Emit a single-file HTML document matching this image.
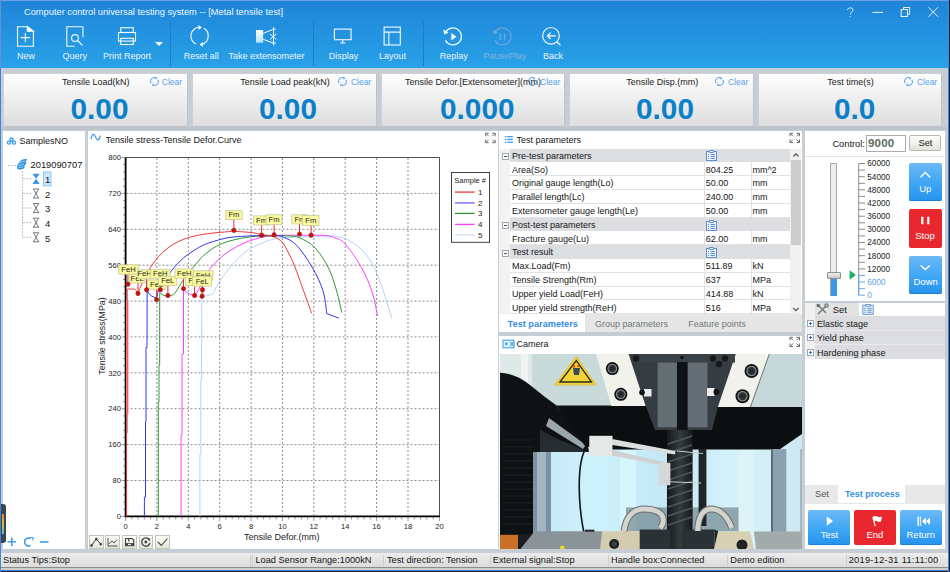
<!DOCTYPE html>
<html><head><meta charset="utf-8">
<style>
*{box-sizing:border-box;margin:0;padding:0}
html,body{width:950px;height:572px;overflow:hidden}
body{position:relative;background:#c6cdd4;font-family:"Liberation Sans",sans-serif;font-size:9px;color:#151515}
.a{position:absolute}
.t{position:absolute;white-space:nowrap;line-height:1}
#hdr{left:0;top:0;width:950px;height:68px;background:linear-gradient(#1e84d8,#29a2e8)}
#hdr .lbl{position:absolute;top:52px;color:#eaf4fc;font-size:9px;white-space:nowrap;line-height:1}
.sep{position:absolute;top:21px;width:1px;height:45px;background:#1f7bcb}
.gauge{position:absolute;top:73px;height:53.5px;background:linear-gradient(#fefefe,#dedede);border:1px solid #cdd1d5;border-right-color:#c0c4c8;border-bottom-color:#c0c4c8}
.gauge .gt{position:absolute;top:77px}
.gauge .cap{position:absolute;top:4px;font-size:9px;color:#222;white-space:nowrap;line-height:1}
.gauge .clr{position:absolute;top:4px;font-size:8.5px;color:#5aa2ea;white-space:nowrap;line-height:1}
.gauge .val{position:absolute;top:20.3px;font-size:29.8px;font-weight:bold;color:#0a80c8;white-space:nowrap;line-height:1}
.panel{position:absolute;background:#fff}
#status{left:0;top:552.5px;width:950px;height:14.5px;background:linear-gradient(#ececec,#dcdcdc)}
#status .t{top:3.7px;font-size:9.2px;color:#151515}
.ssep{position:absolute;top:2px;width:1px;height:12px;background:#c8d0c8}
</style></head><body>
<!-- header -->
<div id="hdr" class="a">
  <div class="a" style="left:0;top:0;width:950px;height:1px;background:#6f9fe4"></div>
  <div class="t" style="left:24px;top:6.6px;font-size:9.9px;color:#eef6fd;transform:scaleX(0.94);transform-origin:0 0">Computer control universal testing system -- [Metal tensile test]</div>
  <svg class="a" style="left:0;top:0" width="950" height="68" viewBox="0 0 950 68" fill="none" stroke="#f4faff" stroke-width="1.1">
    <!-- New -->
    <path d="M17.5 26.7 H27.3 L33.4 31.3 V46.3 H17.5 Z"/>
    <path d="M27.3 26.7 V31.3 H33.4 Z" fill="#f4faff"/>
    <path d="M20.8 37.6 H30.1 M25.4 33 V42.2"/>
    <!-- Query -->
    <path d="M74.7 46.3 H66.8 V26.7 H82.9 V37.6"/>
    <circle cx="75" cy="38" r="3.4"/>
    <path d="M77.5 40.5 L82.4 45.4" stroke-width="1.3"/>
    <!-- Print -->
    <rect x="120.7" y="27.7" width="12.6" height="4.8"/>
    <rect x="118.5" y="32.5" width="17" height="8.6"/>
    <rect x="120.7" y="38.3" width="12.6" height="6.2"/>
    <path d="M155 42.1 H163 L159 46 Z" fill="#f4faff" stroke="none"/>
    <!-- Reset -->
    <path d="M199.5 27.2 A8.8 8.8 0 0 0 196 44" />
    <path d="M203.8 28.2 A8.8 8.8 0 0 1 201.5 44.4" />
    <path d="M198.6 25.6 L201.5 27.4 L198.9 29.4 Z M202.9 42.6 L200 44.5 L202.6 46.4 Z" fill="#f4faff" stroke-width="0.6"/>
    <!-- Extensometer -->
    <rect x="256" y="30.1" width="7.1" height="12.6" fill="url(#extg)" stroke="none"/>
    <path d="M263.1 33.4 L273.5 29.2 H276 M263.1 39.3 L273.5 43.1 H276 M273.5 27.1 V45.4 M270 33.9 L276.3 39.5 M270 39.5 L276.3 33.9" stroke-width="1"/>
    <!-- Display -->
    <rect x="334.4" y="29.1" width="16.7" height="10.6"/>
    <path d="M342.6 39.7 V42.6 M340.2 43 H345.3" stroke-width="1.2"/>
    <!-- Layout -->
    <rect x="384.1" y="27.1" width="16.2" height="17.9"/>
    <path d="M384.1 32.1 H400.3 M388.8 32.1 V45"/>
    <!-- Replay -->
    <path d="M445.4 32.5 A8.5 8.5 0 1 1 445.4 40.4" stroke-width="1.2"/>
    <path d="M443.3 29.5 L444.2 34.6 L448.6 32.4 Z" fill="#f4faff" stroke="none"/>
    <path d="M451.3 33 L456.5 36.7 L451.3 40.5 Z" fill="#f4faff" stroke="none"/>
    <!-- PausePlay -->
    <g stroke="#73a9dc" opacity="0.9">
    <path d="M494.9 32.5 A8.5 8.5 0 1 1 494.9 40.4" stroke-width="1.2"/>
    <path d="M492.8 29.5 L493.7 34.6 L498.1 32.4 Z" fill="#73a9dc" stroke="none"/>
    <path d="M500.2 33.2 V40 M504.6 33.2 V40" stroke-width="1.5"/>
    </g>
    <!-- Back -->
    <circle cx="551" cy="35.8" r="8.3" stroke-width="1.2"/>
    <path d="M556.8 41.8 L560.4 45.3" stroke-width="1.2"/>
    <path d="M547.6 35.8 H555.9 M550.6 32.6 L547.4 35.8 L550.6 39" stroke-width="1.2"/>
    <defs><linearGradient id="extg" x1="0" y1="0" x2="0" y2="1"><stop offset="0" stop-color="#ffffff"/><stop offset="1" stop-color="#aee4f8"/></linearGradient></defs>
  </svg>
  <div class="sep" style="left:170px"></div>
  <div class="sep" style="left:312.5px"></div>
  <div class="sep" style="left:422.5px"></div>
  <div class="lbl" style="left:17px">New</div>
  <div class="lbl" style="left:62.6px">Query</div>
  <div class="lbl" style="left:103px">Print Report</div>
  <div class="lbl" style="left:183.8px">Reset all</div>
  <div class="lbl" style="left:228.5px">Take extensometer</div>
  <div class="lbl" style="left:328.8px">Display</div>
  <div class="lbl" style="left:378.9px">Layout</div>
  <div class="lbl" style="left:439.7px">Replay</div>
  <div class="lbl" style="left:483.4px;color:#82b4dc">PausePlay</div>
  <div class="lbl" style="left:543px">Back</div>
  <!-- window controls -->
  <svg class="a" style="left:840px;top:0" width="110" height="25" viewBox="840 0 110 25" fill="none" stroke="#e8f2fc" stroke-width="1">
    <path d="M847.6 10 C847.6 7.2 853 7.2 853 10 C853 12 850.3 12.2 850.3 14.3" />
    <circle cx="850.3" cy="16.5" r="0.6" fill="#e8f2fc" stroke="none"/>
    <path d="M872.3 12.4 H883"/>
    <rect x="901.2" y="9.5" width="6.2" height="7"/>
    <path d="M903.5 9.5 V7.5 H909.6 V14.2 H907.4"/>
    <path d="M928.5 7.2 L938 16.8 M938 7.2 L928.5 16.8"/>
  </svg>
</div>
<!-- gauges -->
<div class="gauge" style="left:3px;width:185px"><div class="cap" style="left:58.0px">Tensile Load(kN)</div><svg class="a" style="left:145.6px;top:2.8px" width="9" height="9" viewBox="0 0 9 9" fill="none" stroke="#4a9ae6" stroke-width="1"><path d="M6.2 1.1 A3.7 3.7 0 0 0 1.1 6.2 M2.8 7.9 A3.7 3.7 0 0 0 7.9 2.8"/><path d="M5 0.2 L6.8 1 L5.6 2.4 M4 8.8 L2.2 8 L3.4 6.6" stroke-width="0.8"/></svg><div class="clr" style="left:157.8px">Clear</div><div class="val" style="left:66.5px">0.00</div></div>
<div class="gauge" style="left:192px;width:185px"><div class="cap" style="left:47.3px">Tensile Load peak(kN)</div><svg class="a" style="left:145.2px;top:2.8px" width="9" height="9" viewBox="0 0 9 9" fill="none" stroke="#4a9ae6" stroke-width="1"><path d="M6.2 1.1 A3.7 3.7 0 0 0 1.1 6.2 M2.8 7.9 A3.7 3.7 0 0 0 7.9 2.8"/><path d="M5 0.2 L6.8 1 L5.6 2.4 M4 8.8 L2.2 8 L3.4 6.6" stroke-width="0.8"/></svg><div class="clr" style="left:157.9px">Clear</div><div class="val" style="left:66.0px">0.00</div></div>
<div class="gauge" style="left:381px;width:184px"><div class="cap" style="left:23.0px">Tensile Defor.[Extensometer](mm)</div><svg class="a" style="left:145.6px;top:2.8px" width="9" height="9" viewBox="0 0 9 9" fill="none" stroke="#4a9ae6" stroke-width="1"><path d="M6.2 1.1 A3.7 3.7 0 0 0 1.1 6.2 M2.8 7.9 A3.7 3.7 0 0 0 7.9 2.8"/><path d="M5 0.2 L6.8 1 L5.6 2.4 M4 8.8 L2.2 8 L3.4 6.6" stroke-width="0.8"/></svg><div class="clr" style="left:158.1px">Clear</div><div class="val" style="left:58.0px">0.000</div></div>
<div class="gauge" style="left:569px;width:185px"><div class="cap" style="left:56.3px">Tensile Disp.(mm)</div><svg class="a" style="left:145.1px;top:2.8px" width="9" height="9" viewBox="0 0 9 9" fill="none" stroke="#4a9ae6" stroke-width="1"><path d="M6.2 1.1 A3.7 3.7 0 0 0 1.1 6.2 M2.8 7.9 A3.7 3.7 0 0 0 7.9 2.8"/><path d="M5 0.2 L6.8 1 L5.6 2.4 M4 8.8 L2.2 8 L3.4 6.6" stroke-width="0.8"/></svg><div class="clr" style="left:158.0px">Clear</div><div class="val" style="left:66.0px">0.00</div></div>
<div class="gauge" style="left:758px;width:184px"><div class="cap" style="left:68.2px">Test time(s)</div><svg class="a" style="left:145.2px;top:2.8px" width="9" height="9" viewBox="0 0 9 9" fill="none" stroke="#4a9ae6" stroke-width="1"><path d="M6.2 1.1 A3.7 3.7 0 0 0 1.1 6.2 M2.8 7.9 A3.7 3.7 0 0 0 7.9 2.8"/><path d="M5 0.2 L6.8 1 L5.6 2.4 M4 8.8 L2.2 8 L3.4 6.6" stroke-width="0.8"/></svg><div class="clr" style="left:157.9px">Clear</div><div class="val" style="left:75.0px">0.0</div></div>

<!-- panels --><div class="a" style="left:0;top:127px;width:950px;height:3px;background:#bcc4cc"></div>
<div class="panel" style="left:3px;top:131px;width:82px;height:418px"></div>
<div class="panel" style="left:88px;top:131px;width:410px;height:418px"></div>
<div class="panel" style="left:499px;top:131px;width:303px;height:201px"></div>
<div class="panel" style="left:499px;top:335.5px;width:303px;height:213.5px"></div>
<div class="panel" style="left:805px;top:131px;width:140px;height:169.5px"></div>
<div class="panel" style="left:805px;top:303px;width:140px;height:246px"></div>


<!-- left tree -->
<svg class="a" style="left:0;top:125px" width="88" height="130" viewBox="0 125 88 130">
  <g fill="#3d9be9">
    <circle cx="11.5" cy="139.6" r="2.3"/><circle cx="8.9" cy="142.6" r="2.2"/><circle cx="14" cy="142.6" r="2.2"/>
  </g>
  <g fill="#fff"><circle cx="11.5" cy="139.6" r="0.9"/><circle cx="8.9" cy="142.6" r="0.9"/><circle cx="14" cy="142.6" r="0.9"/></g>
  <path d="M17 166 C19 161 23 158 27.2 159.2 L25.5 162 C26.5 162.5 26.8 163.5 25.8 164 L24.2 166.5 C25 167 24.8 168 24 168.5 L21 169.6 C19.5 169.8 17.5 169 17 168 Z" fill="#3596e6"/>
  <path d="M18.5 163 L25 161 M18 165.5 L24 164.2 M18.5 167.6 L23 166.8" stroke="#bfe0fb" stroke-width="0.7"/>
  <g stroke="#c2c2c2" stroke-width="1" stroke-dasharray="2 1" fill="none">
    <path d="M8 165.5 H16.5"/>
    <path d="M22.5 171 V237.5"/>
    <path d="M23 178.7 H31.5 M23 193.4 H31.5 M23 208 H31.5 M23 222.6 H31.5 M23 237.2 H31.5"/>
  </g>
  <path d="M33 174.3 H39.2 L36.1 178.8 Z M33 183.4 H39.2 L36.1 178.8 Z" fill="#2f93e8"/>
  <path d="M32.9 174.3 H39.3 M32.9 183.3 H39.3" stroke="#2f93e8" stroke-width="1"/>
  <rect x="43.5" y="172" width="7.4" height="13.8" fill="#cde8ff" stroke="#7fc0f5" stroke-width="0.9"/>
  <g fill="none" stroke="#6a6a6a" stroke-width="0.9">
    <path d="M33 189 H39.2 M33 198 H39.2 M33.6 189 L38.6 198 M38.6 189 L33.6 198"/>
    <path d="M33 203.6 H39.2 M33 212.6 H39.2 M33.6 203.6 L38.6 212.6 M38.6 203.6 L33.6 212.6"/>
    <path d="M33 218.2 H39.2 M33 227.2 H39.2 M33.6 218.2 L38.6 227.2 M38.6 218.2 L33.6 227.2"/>
    <path d="M33 232.8 H39.2 M33 241.8 H39.2 M33.6 232.8 L38.6 241.8 M38.6 232.8 L33.6 241.8"/>
  </g>
</svg>
<div class="t" style="left:19.6px;top:137.1px;font-size:9px">SamplesNO</div>
<div class="t" style="left:30.6px;top:160.6px;font-size:9.3px">2019090707</div>
<div class="t" style="left:45px;top:175.2px;font-size:9.5px">1</div>
<div class="t" style="left:45px;top:189.8px;font-size:9.5px">2</div>
<div class="t" style="left:45px;top:204.4px;font-size:9.5px">3</div>
<div class="t" style="left:45px;top:219.0px;font-size:9.5px">4</div>
<div class="t" style="left:45px;top:233.6px;font-size:9.5px">5</div>
<!-- left bottom icons -->
<svg class="a" style="left:0;top:530px" width="60" height="20" viewBox="0 530 60 20" fill="none" stroke="#3d9be9" stroke-width="1.6">
  <path d="M7.5 541.8 H16 M11.8 537.5 V546"/>
  <path d="M30.5 538.5 A4 4 0 1 0 30.5 545.5" />
  <path d="M29.5 537.5 H33 V540.5" stroke-width="1.2"/>
  <path d="M40 542 H48.5"/>
</svg>
<div class="a" style="left:1px;top:504px;width:5px;height:39px;background:#3a4550;border-radius:0 3px 3px 0"></div>
<div class="a" style="left:2px;top:514px;width:2px;height:20px;background:linear-gradient(#e08a30,#e0c030,#60b0d0)"></div>

<!-- chart -->
<svg class="a" style="left:88px;top:131px" width="410" height="418" viewBox="88 131 410 418" font-family="Liberation Sans">
  <path d="M91 139 C92.3 133.2 94.2 133.2 95.6 137 C97 141 99 141.2 100.4 135.5" stroke="#3d9be9" stroke-width="1.2" fill="none"/>
  <path d="M485.7 136.2 V133.2 H488.7 M485.7 133.2 L488.7 136.2 M492.2 133.2 H495.2 V136.2 M495.2 133.2 L492.2 136.2 M485.7 139.7 V142.7 H488.7 M485.7 142.7 L488.7 139.7 M495.2 139.7 V142.7 H492.2 M495.2 142.7 L492.2 139.7" stroke="#66707a" stroke-width="1" fill="none"/>
  <path d="M156.9 158 V515 M188.3 158 V515 M219.7 158 V515 M251.1 158 V515 M282.4 158 V515 M313.8 158 V515 M345.2 158 V515 M376.6 158 V515 M408.0 158 V515 M126.5 480.5 H439 M126.5 444.6 H439 M126.5 408.7 H439 M126.5 372.8 H439 M126.5 336.9 H439 M126.5 301.1 H439 M126.5 265.2 H439 M126.5 229.3 H439 M126.5 193.4 H439" stroke="#8c8c8c" stroke-width="1" stroke-dasharray="2 2" fill="none"/>
<path d="M125.5 517 V521 M131.8 517 V519.5 M138.1 517 V519.5 M144.3 517 V519.5 M150.6 517 V519.5 M156.9 517 V521 M163.2 517 V519.5 M169.4 517 V519.5 M175.7 517 V519.5 M182.0 517 V519.5 M188.3 517 V521 M194.6 517 V519.5 M200.8 517 V519.5 M207.1 517 V519.5 M213.4 517 V519.5 M219.7 517 V521 M225.9 517 V519.5 M232.2 517 V519.5 M238.5 517 V519.5 M244.8 517 V519.5 M251.1 517 V521 M257.3 517 V519.5 M263.6 517 V519.5 M269.9 517 V519.5 M276.2 517 V519.5 M282.4 517 V521 M288.7 517 V519.5 M295.0 517 V519.5 M301.3 517 V519.5 M307.6 517 V519.5 M313.8 517 V521 M320.1 517 V519.5 M326.4 517 V519.5 M332.7 517 V519.5 M339.0 517 V519.5 M345.2 517 V521 M351.5 517 V519.5 M357.8 517 V519.5 M364.1 517 V519.5 M370.3 517 V519.5 M376.6 517 V521 M382.9 517 V519.5 M389.2 517 V519.5 M395.5 517 V519.5 M401.7 517 V519.5 M408.0 517 V521 M414.3 517 V519.5 M420.6 517 V519.5 M426.8 517 V519.5 M433.1 517 V519.5 M439.4 517 V521 M121.5 516.4 H125 M123 509.2 H125 M123 502.0 H125 M123 494.9 H125 M123 487.7 H125 M121.5 480.5 H125 M123 473.3 H125 M123 466.2 H125 M123 459.0 H125 M123 451.8 H125 M121.5 444.6 H125 M123 437.4 H125 M123 430.3 H125 M123 423.1 H125 M123 415.9 H125 M121.5 408.7 H125 M123 401.6 H125 M123 394.4 H125 M123 387.2 H125 M123 380.0 H125 M121.5 372.8 H125 M123 365.7 H125 M123 358.5 H125 M123 351.3 H125 M123 344.1 H125 M121.5 336.9 H125 M123 329.8 H125 M123 322.6 H125 M123 315.4 H125 M123 308.2 H125 M121.5 301.1 H125 M123 293.9 H125 M123 286.7 H125 M123 279.5 H125 M123 272.3 H125 M121.5 265.2 H125 M123 258.0 H125 M123 250.8 H125 M123 243.6 H125 M123 236.5 H125 M121.5 229.3 H125 M123 222.1 H125 M123 214.9 H125 M123 207.7 H125 M123 200.6 H125 M121.5 193.4 H125 M123 186.2 H125 M123 179.0 H125 M123 171.9 H125 M123 164.7 H125 M121.5 157.5 H125" stroke="#9a9a9a" stroke-width="1" fill="none"/>
<path d="M125.5 157.5 H439.5 V516" stroke="#505050" stroke-width="1" fill="none"/>
<path d="M125.6 157.5 V516.4 H440" stroke="#000" stroke-width="1.8" fill="none"/>
<g font-family="Liberation Sans" font-size="7.6" fill="#222"><text x="121" y="519.1" text-anchor="end">0</text><text x="121" y="483.2" text-anchor="end">80</text><text x="121" y="447.3" text-anchor="end">160</text><text x="121" y="411.4" text-anchor="end">240</text><text x="121" y="375.5" text-anchor="end">320</text><text x="121" y="339.6" text-anchor="end">400</text><text x="121" y="303.8" text-anchor="end">480</text><text x="121" y="267.9" text-anchor="end">560</text><text x="121" y="232.0" text-anchor="end">640</text><text x="121" y="196.1" text-anchor="end">720</text><text x="121" y="160.2" text-anchor="end">800</text><text x="125.5" y="528.8" text-anchor="middle">0</text><text x="156.9" y="528.8" text-anchor="middle">2</text><text x="188.3" y="528.8" text-anchor="middle">4</text><text x="219.7" y="528.8" text-anchor="middle">6</text><text x="251.1" y="528.8" text-anchor="middle">8</text><text x="282.4" y="528.8" text-anchor="middle">10</text><text x="313.8" y="528.8" text-anchor="middle">12</text><text x="345.2" y="528.8" text-anchor="middle">14</text><text x="376.6" y="528.8" text-anchor="middle">16</text><text x="408.0" y="528.8" text-anchor="middle">18</text><text x="439.4" y="528.8" text-anchor="middle">20</text></g>
  <path d="M127.3 300 V414" stroke="#ff9a9a" stroke-width="2.6" fill="none"/>
<path d="M199.9 516.4 L199.9 454.5 L200.8 454.5 L200.8 380.0 L201.5 380.0 L201.8 290.0 C202.4 290.9 203.8 294.7 205.6 295.3 C207.4 295.9 211.2 294.8 212.9 293.5 C214.6 292.2 214.3 290.5 216.0 287.7 C217.7 284.9 220.0 280.7 223.0 276.5 C226.0 272.3 230.0 267.0 234.2 262.6 C238.4 258.2 243.4 253.3 248.1 250.0 C252.8 246.7 257.4 244.9 262.1 243.0 C266.8 241.1 270.1 239.6 276.4 238.6 C282.7 237.6 290.1 237.4 300.0 237.0 C309.9 236.6 326.6 235.4 335.5 236.4 C344.4 237.4 347.9 239.4 353.6 243.2 C359.3 247.0 364.9 252.2 369.5 259.0 C374.1 265.8 377.2 274.1 380.9 284.0 C384.6 293.9 390.0 312.5 391.8 318.2" stroke="#b4d4f6" stroke-width="1" fill="none"/>
<path d="M181.1 516.4 L181.1 434.8 L182.0 434.8 L182.0 354.0 L183.5 354.0 L183.5 288.6 C183.9 289.2 184.2 291.0 186.0 292.0 C187.8 293.0 192.2 295.8 194.6 294.7 C197.0 293.6 199.2 288.3 200.7 285.5 C202.2 282.7 201.6 281.1 203.4 278.0 C205.2 274.9 208.5 270.4 211.8 266.7 C215.1 263.0 218.8 259.0 223.0 255.6 C227.2 252.2 231.9 249.2 237.0 246.5 C242.1 243.8 247.9 241.3 253.7 239.5 C259.5 237.7 264.2 236.4 271.9 235.7 C279.6 235.0 291.1 235.3 300.0 235.3 C308.9 235.3 319.2 235.1 325.0 235.5 C330.8 235.9 331.8 236.7 335.0 238.0 C338.2 239.3 340.2 238.5 344.5 243.2 C348.8 247.8 355.9 257.9 360.5 265.9 C365.1 273.8 369.0 282.6 371.8 290.9 C374.6 299.2 376.6 311.7 377.5 315.9" stroke="#ff3cff" stroke-width="1" fill="none"/>
<path d="M158.3 516.4 L158.3 402.0 L159.0 402.0 L159.0 365.0 L159.7 365.0 L159.7 293.0 C160.4 293.4 162.6 294.8 164.0 295.3 C165.4 295.8 166.5 296.1 167.9 296.0 C169.3 295.9 171.4 295.4 172.5 295.0 C173.6 294.6 173.3 295.3 174.7 293.4 C176.1 291.5 178.8 287.0 181.0 283.6 C183.2 280.2 185.2 276.7 188.0 273.1 C190.8 269.5 195.1 264.9 197.7 262.0 C200.3 259.1 200.3 258.2 203.4 255.6 C206.5 253.0 211.6 248.9 216.0 246.5 C220.4 244.1 224.2 242.5 230.0 240.9 C235.8 239.3 244.0 237.5 251.0 236.7 C258.0 235.9 265.4 236.1 271.9 236.0 C278.4 235.9 285.3 235.7 290.0 236.0 C294.7 236.3 295.8 236.1 300.0 238.0 C304.2 239.9 310.2 242.7 315.0 247.7 C319.8 252.7 325.0 261.0 328.6 268.2 C332.2 275.4 334.4 283.5 336.6 290.9 C338.8 298.3 340.9 308.9 341.8 312.5" stroke="#2e9a2e" stroke-width="1" fill="none"/>
<path d="M144.4 516.4 L144.4 497.0 L145.5 497.0 L145.5 421.7 L146.0 421.7 L146.0 347.5 L147.0 347.5 L147.1 290.0 C147.7 290.9 148.9 294.1 150.5 295.3 C152.1 296.5 155.2 298.0 156.6 297.1 C157.9 296.2 157.1 293.1 158.6 290.0 C160.1 286.9 163.0 282.4 165.6 278.7 C168.2 275.0 171.0 271.1 174.0 267.6 C177.0 264.1 180.4 260.6 183.7 257.8 C186.9 255.0 190.0 253.0 193.5 250.8 C197.0 248.6 199.8 246.5 204.7 244.5 C209.6 242.5 217.6 240.1 223.0 238.8 C228.4 237.5 231.4 237.2 237.0 236.7 C242.6 236.2 250.5 235.9 256.5 235.7 C262.5 235.5 268.6 235.3 273.0 235.5 C277.4 235.7 279.0 235.3 283.0 237.0 C287.0 238.7 291.9 240.3 296.8 245.5 C301.8 250.7 308.3 260.6 312.7 268.2 C317.1 275.8 320.6 283.3 323.0 290.9 C325.4 298.5 326.2 309.8 326.8 313.6 L338.9 318.2" stroke="#3535f5" stroke-width="1" fill="none"/>
<path d="M126.5 516.4 L126.5 432.7 L127.1 432.7 L127.2 289.0 L127.5 289.0 L134.6 289.0 L136.0 290.5 L138.0 293.5 C138.4 292.4 139.7 289.0 140.7 286.6 C141.7 284.2 142.8 281.7 144.0 279.2 C145.2 276.7 146.5 274.2 148.0 271.6 C149.5 269.0 151.2 266.2 153.0 263.6 C154.8 261.0 156.8 258.5 159.0 256.1 C161.2 253.8 163.5 251.5 166.0 249.5 C168.5 247.5 171.2 245.6 174.0 243.9 C176.8 242.2 179.8 240.8 183.0 239.6 C186.2 238.3 189.5 237.3 193.0 236.4 C196.5 235.5 200.2 234.8 204.0 234.2 C207.8 233.6 212.2 233.1 216.0 232.7 C219.8 232.3 224.0 232.0 227.0 231.8 C230.0 231.6 229.9 231.3 233.9 231.4 C237.9 231.5 246.3 232.0 251.0 232.5 C255.7 233.0 258.4 233.9 262.1 234.6 C265.8 235.3 270.0 235.3 273.3 236.5 C276.6 237.7 279.6 239.4 282.0 242.0 C284.4 244.6 285.9 248.0 288.0 252.0 C290.1 256.0 291.9 259.4 294.5 265.9 C297.1 272.4 300.8 283.0 303.6 290.9 C306.5 298.8 310.3 309.5 311.6 313.2" stroke="#f03838" stroke-width="1" fill="none"/>
<g><path d="M127.9 274.2 V284.3" stroke="#e83030" stroke-width="1"/><rect x="118.7" y="264.9" width="19.6" height="9.3" fill="#fbfb9c" stroke="#c8c8a0" stroke-width="0.8"/><text x="128.5" y="271.8" text-anchor="middle" font-size="7.6" fill="#222">FeH</text></g>
<g><path d="M138.0 283.0 V293.5" stroke="#e83030" stroke-width="1"/><rect x="129.1" y="274.2" width="15.9" height="8.8" fill="#fbfb9c" stroke="#c8c8a0" stroke-width="0.8"/><text x="137.1" y="280.6" text-anchor="middle" font-size="7.6" fill="#222">FeL</text></g>
<g><path d="M146.6 278.8 V289.8" stroke="#e83030" stroke-width="1"/><rect x="137.6" y="269.8" width="14.1" height="9.0" fill="#fbfb9c" stroke="#c8c8a0" stroke-width="0.8"/><text x="144.6" y="276.4" text-anchor="middle" font-size="7.6" fill="#222">FeH</text></g>
<g><path d="M156.6 289.2 V299.6" stroke="#e83030" stroke-width="1"/><rect x="147.4" y="280.0" width="18.4" height="9.2" fill="#fbfb9c" stroke="#c8c8a0" stroke-width="0.8"/><text x="156.6" y="286.8" text-anchor="middle" font-size="7.6" fill="#222">FeL</text></g>
<g><path d="M160.3 278.8 V289.8" stroke="#e83030" stroke-width="1"/><rect x="150.5" y="269.3" width="19.5" height="9.5" fill="#fbfb9c" stroke="#c8c8a0" stroke-width="0.8"/><text x="160.2" y="276.4" text-anchor="middle" font-size="7.6" fill="#222">FeH</text></g>
<g><path d="M167.9 285.5 V295.5" stroke="#e83030" stroke-width="1"/><rect x="158.5" y="276.3" width="18.3" height="9.2" fill="#fbfb9c" stroke="#c8c8a0" stroke-width="0.8"/><text x="167.7" y="283.1" text-anchor="middle" font-size="7.6" fill="#222">FeL</text></g>
<g><path d="M183.5 278.2 V288.6" stroke="#e83030" stroke-width="1"/><rect x="175.0" y="269.0" width="18.3" height="9.2" fill="#fbfb9c" stroke="#c8c8a0" stroke-width="0.8"/><text x="184.2" y="275.8" text-anchor="middle" font-size="7.6" fill="#222">FeH</text></g>
<g><path d="M194.6 285.5 V295.5" stroke="#e83030" stroke-width="1"/><rect x="185.4" y="275.7" width="18.6" height="9.8" fill="#fbfb9c" stroke="#c8c8a0" stroke-width="0.8"/><text x="194.7" y="283.1" text-anchor="middle" font-size="7.6" fill="#222">FeL</text></g>
<g><path d="M202.5 280.0 V289.8" stroke="#e83030" stroke-width="1"/><rect x="193.3" y="270.8" width="19.6" height="9.2" fill="#fbfb9c" stroke="#c8c8a0" stroke-width="0.8"/><text x="203.1" y="277.6" text-anchor="middle" font-size="7.6" fill="#222">FeH</text></g>
<g><path d="M202.1 286.1 V296.3" stroke="#e83030" stroke-width="1"/><rect x="192.7" y="276.3" width="19.0" height="9.8" fill="#fbfb9c" stroke="#c8c8a0" stroke-width="0.8"/><text x="202.2" y="283.7" text-anchor="middle" font-size="7.6" fill="#222">FeL</text></g>
<g><path d="M233.9 219.6 V230.4" stroke="#e83030" stroke-width="1"/><rect x="225.8" y="210.6" width="16.3" height="9.0" fill="#fbfb9c" stroke="#c8c8a0" stroke-width="0.8"/><text x="233.9" y="217.2" text-anchor="middle" font-size="7.6" fill="#222">Fm</text></g>
<g><path d="M261.6 225.0 V235.2" stroke="#e83030" stroke-width="1"/><rect x="253.6" y="215.9" width="15.9" height="9.1" fill="#fbfb9c" stroke="#c8c8a0" stroke-width="0.8"/><text x="261.6" y="222.6" text-anchor="middle" font-size="7.6" fill="#222">Fm</text></g>
<g><path d="M274.1 224.5 V234.8" stroke="#e83030" stroke-width="1"/><rect x="266.1" y="214.8" width="15.9" height="9.7" fill="#fbfb9c" stroke="#c8c8a0" stroke-width="0.8"/><text x="274.1" y="222.1" text-anchor="middle" font-size="7.6" fill="#222">Fm</text></g>
<g><path d="M299.5 223.9 V234.1" stroke="#e83030" stroke-width="1"/><rect x="291.8" y="214.8" width="16.2" height="9.1" fill="#fbfb9c" stroke="#c8c8a0" stroke-width="0.8"/><text x="299.9" y="221.5" text-anchor="middle" font-size="7.6" fill="#222">Fm</text></g>
<g><path d="M311.1 225.5 V235.2" stroke="#e83030" stroke-width="1"/><rect x="302.5" y="215.5" width="16.5" height="10.0" fill="#fbfb9c" stroke="#c8c8a0" stroke-width="0.8"/><text x="310.8" y="223.1" text-anchor="middle" font-size="7.6" fill="#222">Fm</text></g>
<circle cx="127.9" cy="284.3" r="2.2" fill="#cc1010" stroke="#901010" stroke-width="0.5"/><circle cx="138.0" cy="293.5" r="2.2" fill="#cc1010" stroke="#901010" stroke-width="0.5"/><circle cx="146.6" cy="289.8" r="2.2" fill="#cc1010" stroke="#901010" stroke-width="0.5"/><circle cx="156.6" cy="299.6" r="2.2" fill="#cc1010" stroke="#901010" stroke-width="0.5"/><circle cx="160.3" cy="289.8" r="2.2" fill="#cc1010" stroke="#901010" stroke-width="0.5"/><circle cx="167.9" cy="295.5" r="2.2" fill="#cc1010" stroke="#901010" stroke-width="0.5"/><circle cx="183.5" cy="288.6" r="2.2" fill="#cc1010" stroke="#901010" stroke-width="0.5"/><circle cx="194.6" cy="295.5" r="2.2" fill="#cc1010" stroke="#901010" stroke-width="0.5"/><circle cx="202.5" cy="289.8" r="2.2" fill="#cc1010" stroke="#901010" stroke-width="0.5"/><circle cx="202.1" cy="296.3" r="2.2" fill="#cc1010" stroke="#901010" stroke-width="0.5"/><circle cx="233.9" cy="230.4" r="2.2" fill="#cc1010" stroke="#901010" stroke-width="0.5"/><circle cx="261.6" cy="235.2" r="2.2" fill="#cc1010" stroke="#901010" stroke-width="0.5"/><circle cx="274.1" cy="234.8" r="2.2" fill="#cc1010" stroke="#901010" stroke-width="0.5"/><circle cx="299.5" cy="234.1" r="2.2" fill="#cc1010" stroke="#901010" stroke-width="0.5"/><circle cx="311.1" cy="235.2" r="2.2" fill="#cc1010" stroke="#901010" stroke-width="0.5"/>
  <rect x="451.5" y="172.5" width="38" height="69.8" fill="#fff" stroke="#404040" stroke-width="1"/>
  <text x="454.3" y="182.6" font-size="7.5" fill="#222">Sample #</text>
  <g stroke-width="1.3"><path d="M454.9 192.1 H474.6" stroke="#f03838"/><path d="M454.9 202.9 H474.6" stroke="#8080ff" stroke-width="1.6"/><path d="M454.9 213.4 H474.6" stroke="#2e9a2e"/><path d="M454.9 224.4 H474.6" stroke="#ff3cff"/><path d="M454.9 234.9 H474.6" stroke="#c8def6"/></g>
  <g font-size="8" fill="#222"><text x="478" y="195">1</text><text x="478" y="205.8">2</text><text x="478" y="216.3">3</text><text x="478" y="227.3">4</text><text x="478" y="237.8">5</text></g>
  <text transform="translate(104.8 336) rotate(-90)" text-anchor="middle" font-size="8.8" fill="#222">Tensile stress(MPa)</text>
  <text x="281.8" y="540.2" text-anchor="middle" font-size="9" fill="#222">Tensile Defor.(mm)</text>
</svg>
<!-- chart toolbar -->
<div class="a" style="left:89px;top:535.3px;width:14.5px;height:13.3px;border:1px solid #c4c4b8;background:linear-gradient(#fcfcf8,#e6e6dc)"></div>
<div class="a" style="left:105.4px;top:535.3px;width:14.5px;height:13.3px;border:1px solid #c4c4b8;background:linear-gradient(#fcfcf8,#e6e6dc)"></div>
<div class="a" style="left:122.3px;top:535.3px;width:14.5px;height:13.3px;border:1px solid #c4c4b8;background:linear-gradient(#fcfcf8,#e6e6dc)"></div>
<div class="a" style="left:138.5px;top:535.3px;width:14.5px;height:13.3px;border:1px solid #c4c4b8;background:linear-gradient(#fcfcf8,#e6e6dc)"></div>
<div class="a" style="left:155.3px;top:535.3px;width:14.5px;height:13.3px;border:1px solid #c4c4b8;background:linear-gradient(#fcfcf8,#e6e6dc)"></div>
<svg class="a" style="left:88px;top:533px" width="85" height="18" viewBox="88 533 85 18" fill="none" stroke="#404040" stroke-width="1">
  <path d="M91.5 545.5 L96.3 539 L100.8 544.2"/><circle cx="91.5" cy="545.5" r="0.9" fill="#404040"/><circle cx="96.3" cy="539" r="0.9" fill="#404040"/><circle cx="100.8" cy="544.2" r="0.9" fill="#404040"/>
  <path d="M108 538 V546 H117.5 M109 544 L112 541 L114 543 L117 539.5" stroke-width="0.9"/>
  <path d="M125.5 538.5 H132 L133.8 540.3 V545.8 H125.5 Z" stroke-width="1.1"/><path d="M128.8 538.5 V541.5" stroke-width="1.3"/><path d="M125.5 544.3 H133.8" stroke-width="2.4"/><path d="M128 544.5 H131" stroke="#eee" stroke-width="1.2"/>
  <path d="M149.3 539.5 A4.2 4.2 0 1 0 150 543" stroke-width="1.3"/><circle cx="145.8" cy="542" r="1.4" fill="#404040" stroke="none"/><path d="M147.5 538 L150.3 538.8 L149.3 541.5 Z" fill="#404040" stroke="none"/>
  <path d="M157.8 541.8 L161.3 545.5 L167.5 538.5" stroke-width="1.1"/>
</svg>
<div class="t" style="left:105.4px;top:136px;font-size:9px">Tensile stress-Tensile Defor.Curve</div>


<!-- params panel -->
<svg class="a" style="left:504px;top:135px" width="10" height="10" viewBox="0 0 10 10" fill="#3d9be9"><rect x="0.8" y="1" width="1.6" height="1.3"/><rect x="3.2" y="1" width="5.6" height="1.3"/><rect x="0.8" y="3.8" width="1.6" height="1.3"/><rect x="3.2" y="3.8" width="5.6" height="1.3"/><rect x="0.8" y="6.6" width="1.6" height="1.3"/><rect x="3.2" y="6.6" width="5.6" height="1.3"/></svg>
<div class="t" style="left:516.4px;top:135.5px;font-size:9px">Test parameters</div>
<svg class="a" style="left:788px;top:131px" width="14" height="14" viewBox="788 131 14 14"><path d="M790 136.3 V133.3 H793 M790 133.3 L793 136.3 M796.5 133.3 H799.5 V136.3 M799.5 133.3 L796.5 136.3 M790 139.5 V142.5 H793 M790 142.5 L793 139.5 M799.5 139.5 V142.5 H796.5 M799.5 142.5 L796.5 139.5" stroke="#66707a" stroke-width="1" fill="none"/></svg>
<div class="a" style="left:499px;top:148.5px;width:11.2px;height:165.6px;background:#f3f3f3"></div><div class="a" style="left:510.2px;top:148.5px;width:280px;height:13.8px;background:#dcdee2"></div><div class="t" style="left:512px;top:151.7px;font-size:9px">Pre-test parameters</div><svg class="a" style="left:706px;top:150px" width="11" height="11" viewBox="0 0 11 11" fill="none" stroke="#5b8fd0" stroke-width="1"><rect x="0.5" y="1.5" width="10" height="9" fill="#eef4fc"/><path d="M3.5 0.5 H7.5 V2.5 H3.5 Z" fill="#fff"/><path d="M2 4.5 H3 M2 6.5 H3 M2 8.5 H3 M4.5 4.5 H9 M4.5 6.5 H9 M4.5 8.5 H9"/></svg><svg class="a" style="left:501px;top:152px" width="9" height="9" viewBox="0 0 9 9"><rect x="1.5" y="1.5" width="6" height="6" fill="#fff" stroke="#a0a6ae" stroke-width="1"/><path d="M3 4.5 H6" stroke="#505050" stroke-width="1"/></svg><div class="a" style="left:510.2px;top:175.1px;width:280px;height:1px;background:#e2e2e2"></div><div class="t" style="left:512px;top:165.5px;font-size:9px">Area(So)</div><div class="t" style="left:705.7px;top:165.5px;font-size:9px">804.25</div><div class="t" style="left:752.4px;top:165.5px;font-size:9px">mm^2</div><div class="a" style="left:703.5px;top:162.3px;width:1px;height:13.8px;background:#e2e2e2"></div><div class="a" style="left:750.5px;top:162.3px;width:1px;height:13.8px;background:#e2e2e2"></div><div class="a" style="left:510.2px;top:188.9px;width:280px;height:1px;background:#e2e2e2"></div><div class="t" style="left:512px;top:179.3px;font-size:9px">Original gauge length(Lo)</div><div class="t" style="left:705.7px;top:179.3px;font-size:9px">50.00</div><div class="t" style="left:752.4px;top:179.3px;font-size:9px">mm</div><div class="a" style="left:703.5px;top:176.1px;width:1px;height:13.8px;background:#e2e2e2"></div><div class="a" style="left:750.5px;top:176.1px;width:1px;height:13.8px;background:#e2e2e2"></div><div class="a" style="left:510.2px;top:202.7px;width:280px;height:1px;background:#e2e2e2"></div><div class="t" style="left:512px;top:193.1px;font-size:9px">Parallel length(Lc)</div><div class="t" style="left:705.7px;top:193.1px;font-size:9px">240.00</div><div class="t" style="left:752.4px;top:193.1px;font-size:9px">mm</div><div class="a" style="left:703.5px;top:189.9px;width:1px;height:13.8px;background:#e2e2e2"></div><div class="a" style="left:750.5px;top:189.9px;width:1px;height:13.8px;background:#e2e2e2"></div><div class="a" style="left:510.2px;top:216.5px;width:280px;height:1px;background:#e2e2e2"></div><div class="t" style="left:512px;top:206.9px;font-size:9px">Extensometer gauge length(Le)</div><div class="t" style="left:705.7px;top:206.9px;font-size:9px">50.00</div><div class="t" style="left:752.4px;top:206.9px;font-size:9px">mm</div><div class="a" style="left:703.5px;top:203.7px;width:1px;height:13.8px;background:#e2e2e2"></div><div class="a" style="left:750.5px;top:203.7px;width:1px;height:13.8px;background:#e2e2e2"></div><div class="a" style="left:510.2px;top:217.5px;width:280px;height:13.8px;background:#dcdee2"></div><div class="t" style="left:512px;top:220.7px;font-size:9px">Post-test parameters</div><svg class="a" style="left:706px;top:220px" width="11" height="11" viewBox="0 0 11 11" fill="none" stroke="#5b8fd0" stroke-width="1"><rect x="0.5" y="1.5" width="10" height="9" fill="#eef4fc"/><path d="M3.5 0.5 H7.5 V2.5 H3.5 Z" fill="#fff"/><path d="M2 4.5 H3 M2 6.5 H3 M2 8.5 H3 M4.5 4.5 H9 M4.5 6.5 H9 M4.5 8.5 H9"/></svg><svg class="a" style="left:501px;top:221px" width="9" height="9" viewBox="0 0 9 9"><rect x="1.5" y="1.5" width="6" height="6" fill="#fff" stroke="#a0a6ae" stroke-width="1"/><path d="M3 4.5 H6" stroke="#505050" stroke-width="1"/></svg><div class="a" style="left:510.2px;top:244.1px;width:280px;height:1px;background:#e2e2e2"></div><div class="t" style="left:512px;top:234.5px;font-size:9px">Fracture gauge(Lu)</div><div class="t" style="left:705.7px;top:234.5px;font-size:9px">62.00</div><div class="t" style="left:752.4px;top:234.5px;font-size:9px">mm</div><div class="a" style="left:703.5px;top:231.3px;width:1px;height:13.8px;background:#e2e2e2"></div><div class="a" style="left:750.5px;top:231.3px;width:1px;height:13.8px;background:#e2e2e2"></div><div class="a" style="left:510.2px;top:245.1px;width:280px;height:13.8px;background:#dcdee2"></div><div class="t" style="left:512px;top:248.3px;font-size:9px">Test result</div><svg class="a" style="left:706px;top:247px" width="11" height="11" viewBox="0 0 11 11" fill="none" stroke="#5b8fd0" stroke-width="1"><rect x="0.5" y="1.5" width="10" height="9" fill="#eef4fc"/><path d="M3.5 0.5 H7.5 V2.5 H3.5 Z" fill="#fff"/><path d="M2 4.5 H3 M2 6.5 H3 M2 8.5 H3 M4.5 4.5 H9 M4.5 6.5 H9 M4.5 8.5 H9"/></svg><svg class="a" style="left:501px;top:249px" width="9" height="9" viewBox="0 0 9 9"><rect x="1.5" y="1.5" width="6" height="6" fill="#fff" stroke="#a0a6ae" stroke-width="1"/><path d="M3 4.5 H6" stroke="#505050" stroke-width="1"/></svg><div class="a" style="left:510.2px;top:271.7px;width:280px;height:1px;background:#e2e2e2"></div><div class="t" style="left:512px;top:262.1px;font-size:9px">Max.Load(Fm)</div><div class="t" style="left:705.7px;top:262.1px;font-size:9px">511.89</div><div class="t" style="left:752.4px;top:262.1px;font-size:9px">kN</div><div class="a" style="left:703.5px;top:258.9px;width:1px;height:13.8px;background:#e2e2e2"></div><div class="a" style="left:750.5px;top:258.9px;width:1px;height:13.8px;background:#e2e2e2"></div><div class="a" style="left:510.2px;top:285.5px;width:280px;height:1px;background:#e2e2e2"></div><div class="t" style="left:512px;top:275.9px;font-size:9px">Tensile Strength(Rm)</div><div class="t" style="left:705.7px;top:275.9px;font-size:9px">637</div><div class="t" style="left:752.4px;top:275.9px;font-size:9px">MPa</div><div class="a" style="left:703.5px;top:272.7px;width:1px;height:13.8px;background:#e2e2e2"></div><div class="a" style="left:750.5px;top:272.7px;width:1px;height:13.8px;background:#e2e2e2"></div><div class="a" style="left:510.2px;top:299.3px;width:280px;height:1px;background:#e2e2e2"></div><div class="t" style="left:512px;top:289.7px;font-size:9px">Upper yield Load(FeH)</div><div class="t" style="left:705.7px;top:289.7px;font-size:9px">414.88</div><div class="t" style="left:752.4px;top:289.7px;font-size:9px">kN</div><div class="a" style="left:703.5px;top:286.5px;width:1px;height:13.8px;background:#e2e2e2"></div><div class="a" style="left:750.5px;top:286.5px;width:1px;height:13.8px;background:#e2e2e2"></div><div class="a" style="left:510.2px;top:313.1px;width:280px;height:1px;background:#e2e2e2"></div><div class="t" style="left:512px;top:303.5px;font-size:9px">Upper yield strength(ReH)</div><div class="t" style="left:705.7px;top:303.5px;font-size:9px">516</div><div class="t" style="left:752.4px;top:303.5px;font-size:9px">MPa</div><div class="a" style="left:703.5px;top:300.3px;width:1px;height:13.8px;background:#e2e2e2"></div><div class="a" style="left:750.5px;top:300.3px;width:1px;height:13.8px;background:#e2e2e2"></div>
<div class="a" style="left:790.3px;top:148.5px;width:11.2px;height:165.6px;background:#f0f0f0"></div>
<div class="a" style="left:791.4px;top:160px;width:9.2px;height:84.6px;background:#cdcdcd"></div>
<svg class="a" style="left:790px;top:148px" width="12" height="167" viewBox="790 148 12 167" fill="none" stroke="#505050" stroke-width="1.1"><path d="M793.3 156.5 L795.9 153.9 L798.5 156.5 M793.3 308 L795.9 310.6 L798.5 308"/></svg>
<div class="a" style="left:499px;top:314.1px;width:303px;height:17.9px;background:#e6e6e6"></div>
<div class="a" style="left:499px;top:314.1px;width:86.2px;height:17.9px;background:#fff"></div>
<div class="t" style="left:507.6px;top:319.8px;font-size:9.2px;font-weight:bold;color:#3a8fe0">Test parameters</div>
<div class="t" style="left:595px;top:319.6px;font-size:9px;color:#707878">Group parameters</div>
<div class="t" style="left:688.2px;top:319.6px;font-size:9px;color:#707878">Feature points</div>


<!-- camera panel -->
<svg class="a" style="left:502px;top:339px" width="13" height="10" viewBox="0 0 13 10" fill="none" stroke="#4aa0ea" stroke-width="1.1"><rect x="1" y="1.2" width="11" height="7.6" fill="#e8f4fd"/><circle cx="4.3" cy="5" r="1.4" fill="#4aa0ea" stroke="none"/><path d="M8 3 L10 5 L8 7 M12 2.5 L10 5 L12 7.5"/></svg>
<div class="t" style="left:516.5px;top:340.3px;font-size:9px">Camera</div>
<svg class="a" style="left:788px;top:335px" width="14" height="14" viewBox="788 335 14 14"><path d="M790 340.3 V337.3 H793 M790 337.3 L793 340.3 M796.5 337.3 H799.5 V340.3 M799.5 337.3 L796.5 340.3 M790 343.5 V346.5 H793 M790 346.5 L793 343.5 M799.5 343.5 V346.5 H796.5 M799.5 346.5 L796.5 343.5" stroke="#66707a" stroke-width="1" fill="none"/></svg>
<div class="a" style="left:499px;top:353.5px;width:303px;height:1px;background:#c8d4e0"></div>
<svg class="a" style="left:500px;top:354px" width="302" height="195" viewBox="500 354 302 195">
  <defs>
    <linearGradient id="win" x1="0" y1="0" x2="1" y2="0"><stop offset="0" stop-color="#bfe2f0"/><stop offset="0.3" stop-color="#cef2fb"/><stop offset="0.55" stop-color="#c2e8f6"/><stop offset="0.8" stop-color="#d6f3fa"/><stop offset="1" stop-color="#cde8f0"/></linearGradient>
    <linearGradient id="rod" x1="0" y1="0" x2="1" y2="0"><stop offset="0" stop-color="#15191b"/><stop offset="0.5" stop-color="#353b3e"/><stop offset="1" stop-color="#15191b"/></linearGradient>
    <radialGradient id="bolt"><stop offset="0" stop-color="#202426"/><stop offset="0.5" stop-color="#303436"/><stop offset="0.66" stop-color="#8a9496"/><stop offset="0.8" stop-color="#101214"/><stop offset="1" stop-color="#101214"/></radialGradient>
  </defs>
  <rect x="500" y="354" width="302" height="195" fill="url(#win)"/>
  <rect x="620" y="450" width="16" height="85" fill="#d8f8fe" opacity="0.8"/>
  <rect x="738" y="450" width="16" height="85" fill="#e0f2f8" opacity="0.8"/>
  <rect x="626" y="507.4" width="112.6" height="24" fill="#5a6a72" opacity="0.55"/>
  <!-- upper wall -->
  <rect x="500" y="354" width="302" height="54" fill="#c8dada"/>
  <path d="M500 354 H532 V388 L520 378 L500 372.7 Z" fill="#dfe9e8"/>
  <path d="M521 354 H528 V383 L521 379 Z" fill="#f0f5f3"/>
  <!-- left black cover + bellows -->
  <path d="M500 372.7 C510 373 520 377 530 385 L545 397 L556.6 405.4 L588 446 L589 452 H534 V535 H500 Z" fill="#0f1214"/><path d="M540 430 L560 440 L589 452 H540 Z" fill="#262c30"/>
  <g stroke="#20262a" stroke-width="0.9"><path d="M502 440 H533 M502 447 H533 M502 454 H533 M502 461 H533 M502 468 H533 M502 475 H533 M502 482 H533 M502 489 H533 M502 496 H533 M502 503 H533 M502 510 H533 M502 517 H533 M502 524 H533"/></g>
  <path d="M549 418 L586 445 L583 449 L546 426 Z" fill="#9aa6ac"/>
  <!-- gray column left -->
  <rect x="533" y="452" width="18" height="83" fill="#7a92a2"/>
  <rect x="537" y="452" width="9" height="83" fill="#a2b6c2"/>
  <!-- crosshead black band -->
  <path d="M556.6 405.4 H802 V434 L779.5 449.4 H600 L585 446 Z" fill="#0c0f10"/>
  <!-- white plates -->
  <path d="M596 354 H628.6 L645.7 406 H611.4 Z" fill="#f2f2ec"/>
  <path d="M735.8 354 H769.3 L750.4 407.1 H717.8 Z" fill="#f2f2ec"/>
  <circle cx="612.3" cy="368.6" r="6.5" fill="url(#bolt)"/><circle cx="620.8" cy="394.3" r="6.5" fill="url(#bolt)"/>
  <circle cx="751.5" cy="371" r="7" fill="url(#bolt)"/><circle cx="742.5" cy="396.2" r="7" fill="url(#bolt)"/>
  <!-- right wall -->
  <path d="M769.3 354 H802 V407.1 H750.4 Z" fill="#c6d8da"/>
  <path d="M769.3 354 L750.4 407.1" stroke="#50585a" stroke-width="0.8"/>
  <!-- top grip -->
  <path d="M628.6 354 H735.8 L717.8 407.1 L712 430 H655 L645.7 406 Z" fill="#353c42"/>
  <rect x="640" y="354" width="95" height="8.6" fill="#3a4248"/>
  <rect x="657.6" y="362.5" width="19.5" height="64.8" fill="#646e74"/>
  <rect x="687.5" y="362.5" width="20" height="64.8" fill="#646e74"/>
  <rect x="677" y="362" width="10.5" height="68" fill="#101315"/>
  <circle cx="713" cy="358.5" r="3.2" fill="#15191b"/><circle cx="725" cy="358.5" r="3.2" fill="#15191b"/><circle cx="719" cy="364" r="3.2" fill="#15191b"/>
  <circle cx="636" cy="358.5" r="3.2" fill="#15191b"/><circle cx="682" cy="357.5" r="1.8" fill="#101214"/>
  <rect x="707" y="388" width="7.5" height="8" fill="#ececec"/><circle cx="716.5" cy="392" r="3" fill="#101214"/>
  <rect x="644" y="389" width="7.5" height="7.5" fill="#ececec"/><circle cx="642" cy="392.5" r="2.8" fill="#101214"/>
  <!-- warning sign -->
  <path d="M554.9 384.9 L576.3 356.6 L596 384.9 Z" fill="#f2d436" stroke="#e2c44a" stroke-width="1.2" stroke-linejoin="round"/>
  <path d="M560 382 L576.3 360.5 L591.5 382 Z" fill="none" stroke="#2a2a22" stroke-width="1.3"/>
  <path d="M573 368 H580 L579 375 H574 Z" fill="#3c4a58"/><circle cx="574" cy="366.5" r="1.3" fill="#d85020"/><circle cx="578.5" cy="366" r="1.3" fill="#d85020"/>
  <!-- rod -->
  <rect x="667" y="430" width="25.6" height="119" fill="url(#rod)"/>
  <g stroke="#4e585c" stroke-width="1.6"><path d="M668 444 L692 436 M668 453 L692 445 M668 462 L692 454 M668 471 L692 463 M668 480 L692 472 M668 489 L692 481 M668 498 L692 490 M668 507 L692 499 M668 516 L692 508 M668 525 L692 517"/></g>
  <rect x="698.6" y="449" width="7.8" height="77" fill="#202426"/>
  <!-- right column -->
  <rect x="771" y="449" width="15.3" height="85.6" fill="#8ca2b0"/>
  <rect x="771" y="449" width="2" height="85.6" fill="#5a6e7a"/>
  <rect x="800" y="449" width="2" height="86" fill="#a8b8c0"/>
  <!-- extensometer -->
  <path d="M589.3 435.8 H612.5 V456.2 H589.3 Z" fill="#e6e8e8"/>
  <path d="M612 439 L675.5 451 L675 454.5 L612 445 Z" fill="#dcdfdf"/>
  <path d="M612 450 L668.7 463 L668 466.5 L612 455.5 Z" fill="#cdd1d1"/>
  <path d="M658.5 463 H670.4 V485.2 H658.5 Z" fill="#d4d8d8"/>
  <path d="M663 481.5 L701.2 483" stroke="#c8cccc" stroke-width="1.2"/>
  <path d="M677 451 L703 453.5" stroke="#c8cccc" stroke-width="1"/>
  <path d="M586 448 C577 462 578 500 583 528 C585 538 586 544 587 549" stroke="#121618" stroke-width="1.6" fill="none"/>
  <!-- bottom -->
  <rect x="500" y="534.8" width="18.2" height="14.2" fill="#c87028"/>
  <rect x="518" y="534" width="20" height="15" fill="#1a1e20"/>
  <path d="M520.4 549 L534.6 531.2 H602.2 V549 Z" fill="#8a9498"/>
  <circle cx="562.3" cy="548" r="2.5" fill="#e8d030"/>
  <rect x="584.8" y="529.7" width="9.6" height="2" fill="#202426"/>
  <path d="M602.2 531.2 H639.7 L645 549 H600 Z" fill="#d4ccae"/>
  <circle cx="614.2" cy="544" r="5" fill="#1e2224"/><circle cx="614.2" cy="544" r="2.5" fill="#3a4044"/>
  <rect x="639.7" y="529.5" width="30.7" height="19.5" fill="#2a3236"/>
  <rect x="685.7" y="529.5" width="29" height="19.5" fill="#2a3236"/>
  <path d="M714.7 529.5 L718 531 V549 H714.7 Z" fill="#1e2426"/>
  <path d="M624 531 C626 516 634 509 644 509 C654 509 662 512 663 518 C664 523 662 526 660 528" stroke="#6a7072" stroke-width="7" fill="none"/>
  <path d="M624 531 C626 516 634 509 644 509 C654 509 662 512 663 518 C664 523 662 526 660 528" stroke="#d4d4cc" stroke-width="5" fill="none"/>
  <path d="M697.7 531 C698 517 703 509 711.3 509 C721 509 728 518 731.8 528" stroke="#6a7072" stroke-width="7" fill="none"/>
  <path d="M697.7 531 C698 517 703 509 711.3 509 C721 509 728 518 731.8 528" stroke="#d4d4cc" stroke-width="5" fill="none"/>
  <path d="M718 531.5 H750 L754 549 H714 Z" fill="#d8d0b2"/>
  <circle cx="742" cy="545" r="5.5" fill="#1e2224"/>
  <path d="M754 531.5 H802 V549 H756 Z" fill="#a2aaaa"/>
</svg>

<!-- right panel: control -->
<div class="t" style="left:832.4px;top:139.6px;font-size:9.3px">Control:</div>
<div class="a" style="left:866px;top:134.6px;width:39.5px;height:17.1px;border:1px solid #a8acb0;background:#fff"></div>
<div class="t" style="left:868px;top:137.5px;font-size:11.5px;font-weight:bold;color:#5b6b5b;letter-spacing:0.2px">9000</div>
<div class="a" style="left:909px;top:135.1px;width:32.3px;height:15.8px;border:1px solid #b8bab0;border-radius:2px;background:linear-gradient(#fdfdfa,#e4e4dc)"></div>
<div class="t" style="left:918.5px;top:139.2px;font-size:9.3px">Set</div>
<div class="a" style="left:805px;top:156px;width:140px;height:1px;background:#e6e6e6"></div>
<!-- slider -->
<div class="a" style="left:830px;top:163px;width:7px;height:133px;border:1px solid #a8a8a8;background:#ececec"></div>
<div class="a" style="left:830.5px;top:278.8px;width:6px;height:16.8px;background:#3d94e8"></div>
<div class="a" style="left:827px;top:272px;width:13.8px;height:7px;border:1px solid #909090;border-radius:1px;background:linear-gradient(#f0f0f0,#c8c8c8)"></div>
<svg class="a" style="left:845px;top:160px" width="50" height="140" viewBox="845 160 50 140">
  <path d="M849.6 270.2 L855.8 275 L849.6 279.8 Z" fill="#12b060"/>
  <path d="M858.7 163.5 V295.2" stroke="#808080" stroke-width="0.9"/>
  <g stroke="#808080" stroke-width="0.9" id="tk"></g>
  <path d="M858.7 163.5 H865" stroke="#808080" stroke-width="0.9"/><path d="M858.7 170.1 H865" stroke="#808080" stroke-width="0.9"/><path d="M858.7 176.7 H865" stroke="#808080" stroke-width="0.9"/><path d="M858.7 183.3 H865" stroke="#808080" stroke-width="0.9"/><path d="M858.7 189.8 H865" stroke="#808080" stroke-width="0.9"/><path d="M858.7 196.4 H865" stroke="#808080" stroke-width="0.9"/><path d="M858.7 203.0 H865" stroke="#808080" stroke-width="0.9"/><path d="M858.7 209.6 H865" stroke="#808080" stroke-width="0.9"/><path d="M858.7 216.2 H865" stroke="#808080" stroke-width="0.9"/><path d="M858.7 222.8 H865" stroke="#808080" stroke-width="0.9"/><path d="M858.7 229.3 H865" stroke="#808080" stroke-width="0.9"/><path d="M858.7 235.9 H865" stroke="#808080" stroke-width="0.9"/><path d="M858.7 242.5 H865" stroke="#808080" stroke-width="0.9"/><path d="M858.7 249.1 H865" stroke="#808080" stroke-width="0.9"/><path d="M858.7 255.7 H865" stroke="#808080" stroke-width="0.9"/><path d="M858.7 262.3 H865" stroke="#808080" stroke-width="0.9"/><path d="M858.7 268.9 H865" stroke="#808080" stroke-width="0.9"/><path d="M858.7 275.4 H865" stroke="#5aa2ea" stroke-width="0.9"/><path d="M858.7 282.0 H865" stroke="#5aa2ea" stroke-width="0.9"/><path d="M858.7 288.6 H865" stroke="#5aa2ea" stroke-width="0.9"/><path d="M858.7 295.2 H865" stroke="#5aa2ea" stroke-width="0.9"/><text x="867.3" y="166.4" font-family="Liberation Sans" font-size="8.2" fill="#222">60000</text><text x="867.3" y="179.6" font-family="Liberation Sans" font-size="8.2" fill="#222">54000</text><text x="867.3" y="192.7" font-family="Liberation Sans" font-size="8.2" fill="#222">48000</text><text x="867.3" y="205.9" font-family="Liberation Sans" font-size="8.2" fill="#222">42000</text><text x="867.3" y="219.1" font-family="Liberation Sans" font-size="8.2" fill="#222">36000</text><text x="867.3" y="232.2" font-family="Liberation Sans" font-size="8.2" fill="#222">30000</text><text x="867.3" y="245.4" font-family="Liberation Sans" font-size="8.2" fill="#222">24000</text><text x="867.3" y="258.6" font-family="Liberation Sans" font-size="8.2" fill="#222">18000</text><text x="867.3" y="271.8" font-family="Liberation Sans" font-size="8.2" fill="#222">12000</text><text x="867.3" y="284.9" font-family="Liberation Sans" font-size="8.2" fill="#5aa2ea">6000</text><text x="867.3" y="298.1" font-family="Liberation Sans" font-size="8.2" fill="#5aa2ea">0</text><path d="M858.7 275 V295.2" stroke="#5aa2ea" stroke-width="0.9"/>
</svg>
<!-- buttons -->
<div class="a" style="left:908.7px;top:162.9px;width:33.3px;height:38.4px;border-radius:2px;background:linear-gradient(#6cb9f7,#3ea6f4 55%,#2592ec);box-shadow:inset 0 -1px 0 #1c7ed6"></div>
<div class="t" style="left:919.2px;top:184.1px;font-size:9.5px;color:#fff">Up</div>
<div class="a" style="left:908.7px;top:209.2px;width:33.3px;height:38.5px;border-radius:2px;background:#e8282e"></div>
<div class="t" style="left:915.2px;top:231px;font-size:9.5px;color:#fff">Stop</div>
<div class="a" style="left:908.7px;top:255.8px;width:33.3px;height:37.9px;border-radius:2px;background:linear-gradient(#6cb9f7,#3ea6f4 55%,#2592ec);box-shadow:inset 0 -1px 0 #1c7ed6"></div>
<svg class="a" style="left:908px;top:255px" width="35" height="40" viewBox="908 255 35 40" fill="none" stroke="#fff" stroke-width="1.4"><path d="M920.8 265.4 L925.3 269.6 L929.8 265.4"/></svg>
<div class="t" style="left:913.5px;top:277.4px;font-size:9.5px;color:#fff">Down</div>
<svg class="a" style="left:908px;top:162px" width="35" height="88" viewBox="908 162 35 88" fill="none" stroke="#fff" stroke-width="1.4"><path d="M920.5 177.3 L925.3 172.5 L930.1 177.3"/><path d="M922.3 216.8 V224.2 M928.3 216.8 V224.2" stroke-width="2.2"/></svg>


<!-- set panel -->
<div class="a" style="left:805px;top:303px;width:10px;height:12.5px;background:#f0f0f0"></div><div class="a" style="left:815px;top:303px;width:44px;height:12.5px;background:#e2e2e2"></div>
<svg class="a" style="left:816px;top:303px" width="13" height="13" viewBox="0 0 13 13" fill="none" stroke="#6a7a70" stroke-width="1.3"><path d="M2 11 L10 3 M3 3 L10 10"/><circle cx="10.5" cy="2.5" r="1.6"/><circle cx="2.3" cy="2.5" r="1.2" fill="#6a7a70"/></svg>
<div class="t" style="left:832.8px;top:305.6px;font-size:9.3px">Set</div>
<svg class="a" style="left:861.5px;top:304px" width="12" height="11" viewBox="0 0 12 11" fill="none" stroke="#5b8fd0" stroke-width="0.9"><rect x="0.8" y="1.2" width="10.4" height="9.2" fill="#e4eefa"/><path d="M3.5 0.6 H8.5 V2.2 H3.5 Z" fill="#fff"/><path d="M2.2 4.3 H3.8 M5.3 4.3 H9.8 M2.2 6.3 H3.8 M5.3 6.3 H9.8 M2.2 8.3 H3.8 M5.3 8.3 H9.8"/></svg>
<div class="a" style="left:805px;top:315.5px;width:10px;height:43.1px;background:#f2f2f2"></div>
<div class="a" style="left:815px;top:315.5px;width:130px;height:43.1px;background:#dcdde0"></div>
<div class="a" style="left:815px;top:329.6px;width:130px;height:1px;background:#eaeaea"></div>
<div class="a" style="left:815px;top:343.9px;width:130px;height:1px;background:#eaeaea"></div>
<svg class="a" style="left:806px;top:319px" width="9" height="9" viewBox="0 0 9 9"><rect x="1.5" y="1.5" width="6" height="6" fill="#fff" stroke="#a0a6ae" stroke-width="1"/><path d="M3 4.5 H6 M4.5 3 V6" stroke="#2a6ad0" stroke-width="1"/></svg><svg class="a" style="left:806px;top:333px" width="9" height="9" viewBox="0 0 9 9"><rect x="1.5" y="1.5" width="6" height="6" fill="#fff" stroke="#a0a6ae" stroke-width="1"/><path d="M3 4.5 H6 M4.5 3 V6" stroke="#2a6ad0" stroke-width="1"/></svg><svg class="a" style="left:806px;top:348px" width="9" height="9" viewBox="0 0 9 9"><rect x="1.5" y="1.5" width="6" height="6" fill="#fff" stroke="#a0a6ae" stroke-width="1"/><path d="M3 4.5 H6 M4.5 3 V6" stroke="#2a6ad0" stroke-width="1"/></svg>
<div class="t" style="left:817px;top:320.1px;font-size:9px">Elastic stage</div>
<div class="t" style="left:817px;top:334.3px;font-size:9px">Yield phase</div>
<div class="t" style="left:817px;top:348.6px;font-size:9px">Hardening phase</div>
<!-- process tabs -->
<div class="a" style="left:805px;top:484.8px;width:140px;height:19.4px;background:#e8e8e8"></div>
<div class="a" style="left:837.6px;top:484.8px;width:67.9px;height:17.8px;background:#fff"></div>
<div class="t" style="left:815px;top:489.8px;font-size:9.3px;color:#555">Set</div>
<div class="t" style="left:845px;top:489.8px;font-size:9px;font-weight:bold;color:#3a8fe0">Test process</div>
<div class="a" style="left:808.2px;top:510px;width:42.3px;height:34.5px;border-radius:2px;background:linear-gradient(#6cb9f7,#3ea6f4 55%,#2592ec);box-shadow:inset 0 -1px 0 #1c7ed6"></div>
<div class="a" style="left:854px;top:510px;width:42px;height:34.5px;border-radius:2px;background:#e8282e"></div>
<div class="a" style="left:899.5px;top:510px;width:42.1px;height:34.5px;border-radius:2px;background:linear-gradient(#6cb9f7,#3ea6f4 55%,#2592ec);box-shadow:inset 0 -1px 0 #1c7ed6"></div>
<svg class="a" style="left:808px;top:510px" width="134" height="35" viewBox="808 510 134 35" fill="#fff">
  <path d="M826.8 516.4 L833 521.1 L826.8 525.8 Z"/>
  <path d="M872.5 517 C874 515.5 876.5 516 878 516.8 C879.5 517.5 881 517 882 516.5 L881 521.5 C879 522.5 877 521.2 875.5 520.8 L874.5 520.8 L875.8 526 L874.7 526.3 L872.3 517.5 Z"/>
  <rect x="917.5" y="516.5" width="1.6" height="9.5"/><rect x="920" y="516.5" width="1.2" height="9.5" opacity="0.7"/>
  <path d="M922 521.2 L926 517.5 V524.9 Z M926 521.2 L930 517.5 V524.9 Z"/>
</svg>
<div class="t" style="left:820.8px;top:529.5px;font-size:9.5px;color:#fff">Test</div>
<div class="t" style="left:866.5px;top:529.5px;font-size:9.5px;color:#fff">End</div>
<div class="t" style="left:906.5px;top:529.5px;font-size:9.5px;color:#fff">Return</div>

<!-- status -->
<div id="status" class="a">
  <div class="t" style="left:3px">Status Tips:Stop</div>
  <div class="ssep" style="left:250px"></div><div class="ssep" style="left:252px"></div>
  <div class="t" style="left:255.5px">Load Sensor Range:1000kN</div>
  <div class="ssep" style="left:383px"></div>
  <div class="t" style="left:387px">Test direction: Tension</div>
  <div class="ssep" style="left:490px"></div>
  <div class="t" style="left:492.8px">External signal:Stop</div>
  <div class="ssep" style="left:607.5px"></div>
  <div class="t" style="left:611px">Handle box:Connected</div>
  <div class="ssep" style="left:727px"></div>
  <div class="t" style="left:730.3px">Demo edition</div>
  <div class="ssep" style="left:846px"></div>
  <div class="t" style="left:848.7px;letter-spacing:0.31px">2019-12-31 11:11:00</div>
</div>
<div class="a" style="left:0;top:567px;width:950px;height:1px;background:#8c8c8c"></div>
<div class="a" style="left:0;top:568px;width:950px;height:2px;background:#cfcfcf"></div>
<div class="a" style="left:0;top:570px;width:950px;height:1px;background:#3a86dc"></div><div class="a" style="left:0;top:571px;width:950px;height:1px;background:#1c2230"></div>
<!-- frame borders -->
<div class="a" style="left:0;top:0;width:1px;height:68px;background:#6b8fd6"></div><div class="a" style="left:0;top:68px;width:1px;height:504px;background:#3c84dc"></div>
<div class="a" style="left:948px;top:0;width:1px;height:572px;background:#3a86dc"></div><div class="a" style="left:949px;top:0;width:1px;height:572px;background:#1c2230"></div>
</body></html>
